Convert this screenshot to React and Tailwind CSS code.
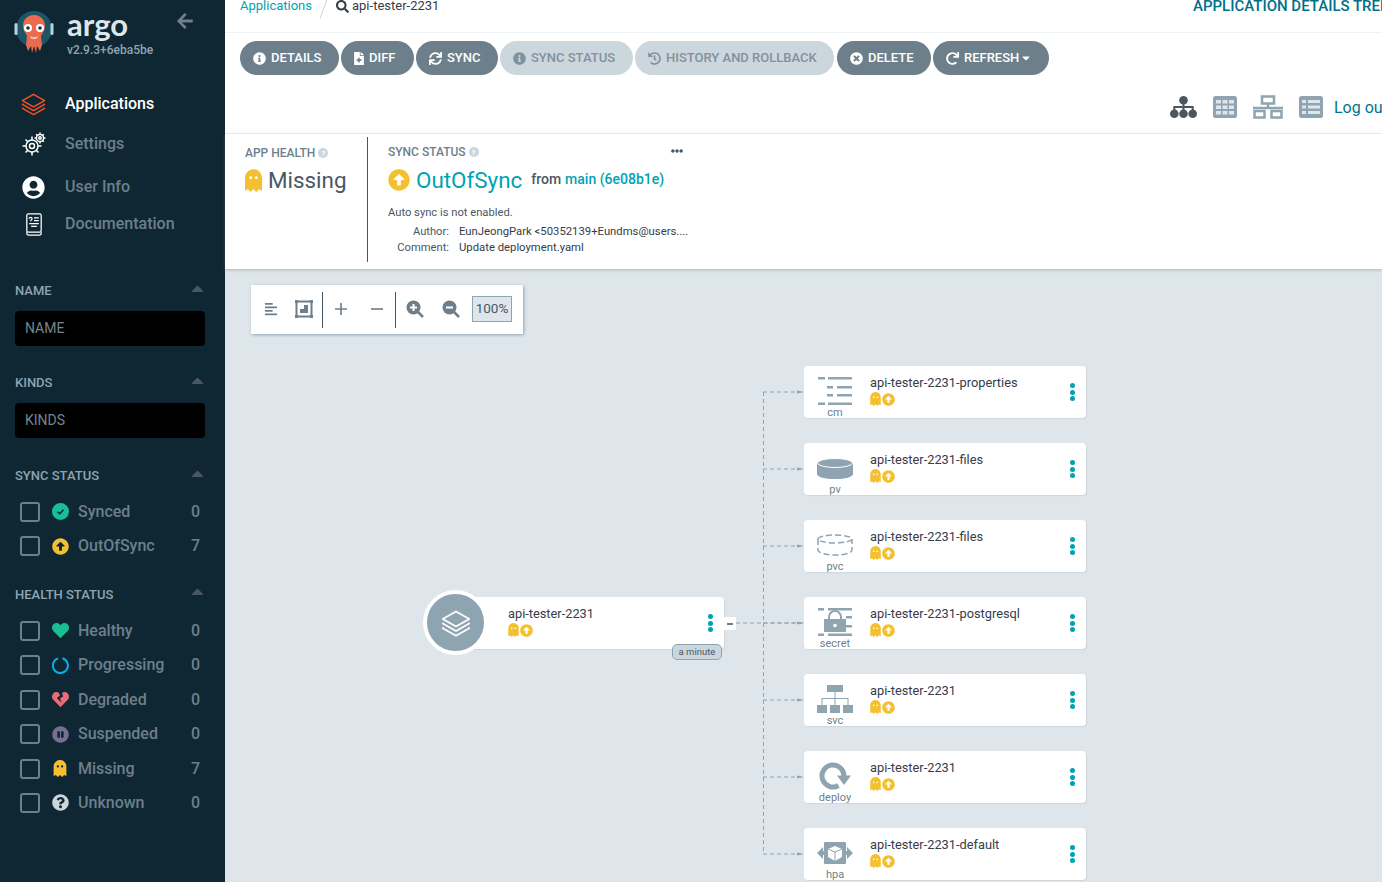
import React from 'react';
import {
  FaArrowLeft, FaCaretUp, FaCaretDown, FaArrowAltCircleUp, FaHeart, FaHeartBroken, FaPauseCircle,
  FaGhost, FaQuestionCircle, FaInfoCircle, FaFileMedical, FaSync, FaHistory, FaTimesCircle, FaRedo, FaSearch,
  FaUserCircle, FaQuestion, FaEllipsisH, FaAlignLeft,
} from 'react-icons/fa';

const nodes = [
  { top: 97, name: 'api-tester-2231-properties', kind: 'cm', Icon: CmIcon },
  { top: 174, name: 'api-tester-2231-files', kind: 'pv', Icon: PvIcon },
  { top: 251, name: 'api-tester-2231-files', kind: 'pvc', Icon: PvcIcon },
  { top: 328, name: 'api-tester-2231-postgresql', kind: 'secret', Icon: SecretIcon },
  { top: 405, name: 'api-tester-2231', kind: 'svc', Icon: SvcIcon },
  { top: 482, name: 'api-tester-2231', kind: 'deploy', Icon: DeployIcon },
  { top: 559, name: 'api-tester-2231-default', kind: 'hpa', Icon: HpaIcon },
];

const buttons = [
  { label: 'DETAILS', Icon: FaInfoCircle, size: 'w-[99px]', iconSize: 'w-[13px]' },
  { label: 'DIFF', Icon: FaFileMedical, size: 'w-[73px]', iconSize: 'w-[10px]' },
  { label: 'SYNC', Icon: FaSync, size: 'w-[82px]', iconSize: 'w-[13px]' },
  { label: 'SYNC STATUS', Icon: FaInfoCircle, off: true, size: 'w-[133px]', iconSize: 'w-[13px]' },
  { label: 'HISTORY AND ROLLBACK', Icon: FaHistory, off: true, size: 'w-[199px]', iconSize: 'w-[13px]' },
  { label: 'DELETE', Icon: FaTimesCircle, size: 'w-[94px] ml-[1px]', iconSize: 'w-[13px]' },
  { label: 'REFRESH', Icon: FaRedo, caret: true, size: 'w-[116px]', iconSize: 'w-[13px]' },
];

function Logo() {
  return (
    <svg viewBox="0 0 40 46" className="w-[40px] h-[46px] shrink-0">
      <circle cx="20" cy="20" r="18" fill="#1d5566" />
      <rect x="0.5" y="14" width="3" height="12" rx="1.5" fill="#b9d3dc" />
      <rect x="36.5" y="14" width="3" height="12" rx="1.5" fill="#b9d3dc" />
      <path d="M9 17c0-7 5-11 11-11s11 4 11 11c0 5-3 7-4 10l1 9-2 6-3-5-1 7-2-7-2 7-1-7-3 5-2-6 1-9c-1-3-4-5-4-10z" fill="#ea6b4e" />
      <circle cx="14" cy="19" r="4" fill="#fff" />
      <circle cx="26" cy="19" r="4" fill="#fff" />
      <circle cx="14" cy="19" r="1.8" fill="#1f2d36" />
      <circle cx="26" cy="19" r="1.8" fill="#1f2d36" />
      <path d="M16 27c2 2 6 2 8 0l-1 2c-2 1-4 1-6 0z" fill="#fff" />
    </svg>
  );
}

function LayersIcon({ className, stroke }) {
  return (
    <svg viewBox="0 0 26 24" fill="none" stroke={stroke} strokeWidth="1.5" strokeLinejoin="round" className={className}>
      <path d="M13 2 L24.5 8.5 L13 15 L1.5 8.5Z" />
      <path d="M2.5 12 L1.5 12.5 L13 19 L24.5 12.5 L23.5 12" />
      <path d="M2.5 16 L1.5 16.5 L13 23 L24.5 16.5 L23.5 16" />
    </svg>
  );
}

function GearsIcon() {
  return (
    <svg viewBox="0 0 24 24" fill="none" stroke="#fff" strokeWidth="1.5" className="w-[24px] h-[24px]">
      <circle cx="10" cy="14" r="6" />
      <circle cx="10" cy="14" r="2.5" />
      <circle cx="18" cy="6" r="3.6" />
      <circle cx="18" cy="6" r="1.2" />
      <path d="M10 4.500v3.500M10 20v3.500M0.500 14h3.500M16 14h3.500M3.500 7.500l2.300 2.300M14.200 18.200l2.300 2.300M3.500 20.500l2.300-2.300M18 0.500v2M18 9.500v2M12.500 6h2M21.500 6h2M14.200 2.200l1.300 1.300M20.500 8.500l1.300 1.300M21.800 2.200l-1.300 1.300" />
    </svg>
  );
}

function DocIcon() {
  return (
    <svg viewBox="0 0 18 24" fill="none" stroke="#fff" strokeWidth="1.3" className="w-[18px] h-[23px]">
      <rect x="1.5" y="1" width="15" height="19" rx="1.5" />
      <path d="M1.5 20v1.5a1.5 1.5 0 0 0 1.5 1.500h12a1.5 1.5 0 0 0 1.500-1.500V20" />
      <path d="M9 5h5M9 8h5M4 11h10M6 14h6" />
      <path d="M4 6c0-2 3-2 3 0 0 1-1.500 1-1.500 2.500" />
    </svg>
  );
}

function SitemapIcon() {
  return (
    <svg viewBox="0 0 27 22" fill="#495763" className="w-[27px] h-[22px]">
      <circle cx="13.500" cy="4.300" r="4.300" />
      <circle cx="4.300" cy="17.700" r="4.300" />
      <circle cx="13.500" cy="17.700" r="4.300" />
      <circle cx="22.700" cy="17.700" r="4.300" />
      <path d="M12.500 6h2v4h9.200v5h-2v-3h-7.200v3h-2v-3H5.300v3h-2v-5h9.200z" />
    </svg>
  );
}

function GridIcon() {
  return (
    <svg viewBox="0 0 24 22" className="w-[24px] h-[22px]">
      <rect width="24" height="22" rx="2.500" fill="#8fa4b1" />
      {[3, 9.500, 16].map((x) =>
        [4, 9.500, 15].map((y) => <rect key={`${x}-${y}`} x={x} y={y} width="5" height="3.500" fill="#dee6eb" />)
      )}
    </svg>
  );
}

function NetworkIcon() {
  return (
    <svg viewBox="0 0 30 24" fill="none" stroke="#8fa4b1" strokeWidth="2.500" className="w-[30px] h-[24px]">
      <rect x="9" y="1.500" width="12" height="7" />
      <path d="M15 8.500v4.500M0 13h30" />
      <rect x="1.500" y="16" width="10" height="6.500" />
      <rect x="18.500" y="16" width="10" height="6.500" />
    </svg>
  );
}

function ListIcon() {
  return (
    <svg viewBox="0 0 24 22" className="w-[24px] h-[22px]">
      <rect width="24" height="22" rx="2.500" fill="#8fa4b1" />
      {[4, 9.500, 15].map((y) => (
        <g key={y} fill="#dee6eb">
          <rect x="3" y={y} width="4" height="3" />
          <rect x="9" y={y} width="12" height="3" />
        </g>
      ))}
    </svg>
  );
}

function CmIcon() {
  return (
    <svg viewBox="0 0 34 28" fill="#8fa4b1" className="w-[34px] h-[28px]">
      <rect x="0" y="0" width="7" height="2.500" />
      <rect x="10" y="0" width="24" height="2.500" />
      <rect x="9" y="9" width="6" height="2.500" />
      <rect x="19" y="9" width="15" height="2.500" />
      <rect x="9" y="17" width="6" height="2.500" />
      <rect x="19" y="17" width="15" height="2.500" />
      <rect x="0" y="25.500" width="7" height="2.500" />
      <rect x="10" y="25.500" width="24" height="2.500" />
    </svg>
  );
}

function PvIcon() {
  return (
    <svg viewBox="0 0 36 21" className="w-[36px] h-[21px]">
      <path d="M0 5v11c0 3 8 5 18 5s18-2 18-5V5z" fill="#8fa4b1" />
      <ellipse cx="18" cy="5" rx="17.500" ry="4.500" fill="#8fa4b1" stroke="#fff" strokeWidth="1" />
    </svg>
  );
}

function PvcIcon() {
  return (
    <svg viewBox="0 0 36 22" fill="none" stroke="#8fa4b1" strokeWidth="1.500" strokeDasharray="6 3" className="w-[36px] h-[22px]">
      <ellipse cx="18" cy="5" rx="17" ry="4" />
      <path d="M1 5v11c0 3 8 5 17 5s17-2 17-5V5" />
    </svg>
  );
}

function SecretIcon() {
  return (
    <svg viewBox="0 0 34 28" fill="#8fa4b1" className="w-[34px] h-[28px]">
      <rect x="0" y="0" width="6" height="2.500" />
      <rect x="10" y="0" width="24" height="2.500" />
      <rect x="28" y="8" width="6" height="2.500" />
      <rect x="28" y="17" width="6" height="2.500" />
      <rect x="0" y="25.500" width="6" height="2.500" />
      <rect x="10" y="25.500" width="24" height="2.500" />
      <path d="M11 11V9a6 6 0 0 1 12 0v2" fill="none" stroke="#8fa4b1" strokeWidth="2" />
      <path d="M6 11h22v13H6z" />
      <circle cx="17" cy="17.500" r="1.800" fill="#fff" />
    </svg>
  );
}

function SvcIcon() {
  return (
    <svg viewBox="0 0 36 28" fill="#8fa4b1" className="w-[36px] h-[28px]">
      <rect x="10" y="0" width="16" height="7" />
      <rect x="0" y="20" width="10" height="8" />
      <rect x="13" y="20" width="10" height="8" />
      <rect x="26" y="20" width="10" height="8" />
      <path d="M17.500 7h1v6h13v7h-1v-6h-12v6h-1v-6h-12v6h-1v-7h13z" />
    </svg>
  );
}

function DeployIcon() {
  return (
    <svg viewBox="0 0 32 28" fill="none" className="w-[32px] h-[28px]">
      <path d="M19.500 23.500A11 11 0 1 1 25 14" stroke="#8fa4b1" strokeWidth="5" />
      <path d="M18 13.500h14l-7 9.500z" fill="#8fa4b1" />
    </svg>
  );
}

function HpaIcon() {
  return (
    <svg viewBox="0 0 36 22" className="w-[36px] h-[22px]">
      <path d="M0 11l6-6v4h3v4H6v4zM36 11l-6-6v4h-3v4h3v4z" fill="#8fa4b1" />
      <rect x="7" y="0" width="22" height="22" rx="1" fill="#8fa4b1" />
      <path d="M18 4l7 3v8l-7 4-7-4V7z" fill="#fff" />
      <path d="M18 10v9M11 7l7 3 7-3" stroke="#8fa4b1" fill="none" strokeWidth="1" />
    </svg>
  );
}

function ZoomIcon({ plus }) {
  return (
    <svg viewBox="0 0 18 18" className="w-[18px] h-[18px] -mt-[2px]">
      <circle cx="7.500" cy="7.500" r="7" fill="#6d7f8b" />
      <path d="M12 12l5 5" stroke="#6d7f8b" strokeWidth="2.500" />
      <path d={plus ? 'M7.500 4v7M4 7.500h7' : 'M4 7.500h7'} stroke="#fff" strokeWidth="2" />
    </svg>
  );
}

function Dots() {
  return (
    <div className="flex flex-col gap-[1.500px]">
      <span className="w-[5px] h-[5px] rounded-full bg-[#00a2b3]" />
      <span className="w-[5px] h-[5px] rounded-full bg-[#00a2b3]" />
      <span className="w-[5px] h-[5px] rounded-full bg-[#00a2b3]" />
    </div>
  );
}

function NodeStatus() {
  return (
    <div className="flex items-center gap-[1px] mt-[1px]">
      <FaGhost className="w-[11px] h-[14px] text-[#f4c030]" />
      <FaArrowAltCircleUp className="w-[13px] h-[13px] text-[#f4c030]" />
    </div>
  );
}

function ResourceNode({ top, name, kind, Icon }) {
  return (
    <div
      className="absolute left-[579px] w-[282px] h-[52px] bg-white rounded-[4px] shadow-[1px_1px_1px_#ccd6dd] flex items-stretch"
      style={{ top }}
    >
      <div className="w-[62px] shrink-0 flex flex-col items-center relative">
        <div className="h-[50px] flex items-center justify-center">
          <Icon />
        </div>
        <span className="absolute top-[40px] text-[11px] leading-[13px] text-[#6d7f8b]">{kind}</span>
      </div>
      <div className="ml-[4px] pt-[8px] flex-1">
        <div className="text-[12.800px] leading-[17px] text-[#363c4a]">{name}</div>
        <NodeStatus />
      </div>
      <div className="absolute left-[266px] top-[17px]">
        <Dots />
      </div>
    </div>
  );
}

function Edges() {
  const ys = [123, 200, 277, 354, 431, 508, 585];
  return (
    <svg className="absolute left-0 top-0 w-[1157px] h-[613px]" fill="none">
      <path d="M511 354H579" stroke="#8fa4b1" strokeWidth="1" strokeDasharray="4 3" />
      <path d="M538.500 123V585" stroke="#8fa4b1" strokeWidth="1" strokeDasharray="4 3" />
      {ys.map((y) => (
        <g key={y}>
          <path d={`M538 ${y}H576`} stroke="#8fa4b1" strokeWidth="1" strokeDasharray="4 3" />
          <path d={`M572 ${y - 1.500}l7 1.500-7 1.500z`} fill="#8fa4b1" />
        </g>
      ))}
    </svg>
  );
}

function Check() {
  return <span className="w-[20px] h-[20px] rounded-[3px] border-2 border-[#6d7f8b] shrink-0" />;
}

function SyncedIcon() {
  return (
    <svg viewBox="0 0 17 17" className="w-[17px] h-[17px]">
      <circle cx="8.500" cy="8.500" r="8.500" fill="#18be94" />
      <path d="M5.500 8.800l2.200 2 3.800-4" fill="none" stroke="#0f2733" strokeWidth="1.500" />
    </svg>
  );
}

function ProgressIcon() {
  return (
    <svg viewBox="0 0 17 17" fill="none" className="w-[17px] h-[17px]">
      <path d="M10.500 1.300A7.500 7.500 0 1 1 6 1.400" stroke="#0dadea" strokeWidth="2" />
    </svg>
  );
}

function FilterRow({ icon, label, count }) {
  return (
    <div className="h-[34.400px] flex items-center pl-[20px] pr-[25px] text-[16px] font-medium text-[#6d7f8b]">
      <Check />
      <span className="w-[18px] ml-[11px] mr-[1px] flex justify-center">{icon}</span>
      <span className="ml-[8px] flex-1">{label}</span>
      <span>{count}</span>
    </div>
  );
}

function SectionHead({ label, className }) {
  return (
    <div className={`flex items-center justify-between pl-[15px] pr-[18px] text-[13px] leading-[16px] font-medium text-[#8fa4b1] ${className}`}>
      <span>{label}</span>
      <FaCaretUp className="w-[19px] h-[19px] text-[#495763] -mt-[6px]" />
    </div>
  );
}

function SideInput({ label, className }) {
  return (
    <div className={`ml-[15px] mr-[20px] h-[35px] bg-black rounded-[4px] flex items-center pl-[10px] text-[14px] text-[#75858f] ${className}`}>
      {label}
    </div>
  );
}

function NavItem({ icon, label, active, className }) {
  return (
    <div className={`flex items-center h-[24px] ${className}`}>
      <span className="w-[65px] pl-[21px] flex">
        <span className="w-[25px] flex justify-center">{icon}</span>
      </span>
      <span className={`text-[16px] font-medium ${active ? 'text-white' : 'text-[#6d7f8b]'}`}>{label}</span>
    </div>
  );
}

function Sidebar() {
  return (
    <aside className="w-[225px] shrink-0 bg-[#0f2733] flex flex-col overflow-hidden">
      <div className="flex pl-[14px] pt-[9px] h-[84px]">
        <Logo />
        <div className="ml-[13px] -mt-[1px]">
          <div className="text-[31px] leading-[32px] font-bold text-[#dee6eb] font-['Lato',sans-serif]">argo</div>
          <div className="mt-[3px] text-[12px] leading-[14px] font-medium text-[#8fa4b1]">v2.9.3+6eba5be</div>
        </div>
        <FaArrowLeft className="ml-[23px] mt-[3px] w-[18px] h-[18px] text-[#6d7f8b]" />
      </div>
      <NavItem icon={<LayersIcon className="w-[26px] h-[24px]" stroke="#f4512c" />} label="Applications" active className="mt-[8px]" />
      <NavItem icon={<GearsIcon />} label="Settings" className="mt-[16px]" />
      <NavItem icon={<FaUserCircle className="w-[23px] h-[23px] text-white -ml-[1px]" />} label="User Info" className="mt-[19px]" />
      <NavItem icon={<DocIcon />} label="Documentation" className="mt-[13px]" />

      <SectionHead label="NAME" className="mt-[47px]" />
      <SideInput label="NAME" className="mt-[12px]" />
      <SectionHead label="KINDS" className="mt-[29px]" />
      <SideInput label="KINDS" className="mt-[12px]" />
      <SectionHead label="SYNC STATUS" className="mt-[30px]" />
      <div className="mt-[10.600px]">
        <FilterRow icon={<SyncedIcon />} label="Synced" count="0" />
        <FilterRow icon={<FaArrowAltCircleUp className="w-[17px] h-[17px] text-[#f4c030]" />} label="OutOfSync" count="7" />
      </div>
      <SectionHead label="HEALTH STATUS" className="mt-[23.400px]" />
      <div className="mt-[11px]">
        <FilterRow icon={<FaHeart className="w-[17px] h-[17px] text-[#18be94]" />} label="Healthy" count="0" />
        <FilterRow icon={<ProgressIcon />} label="Progressing" count="0" />
        <FilterRow icon={<FaHeartBroken className="w-[17px] h-[17px] text-[#e96d76]" />} label="Degraded" count="0" />
        <FilterRow icon={<FaPauseCircle className="w-[17px] h-[17px] text-[#766f94]" />} label="Suspended" count="0" />
        <FilterRow icon={<FaGhost className="w-[14px] h-[17px] text-[#f4c030]" />} label="Missing" count="7" />
        <FilterRow icon={<FaQuestionCircle className="w-[17px] h-[17px] text-[#ccd6dd]" />} label="Unknown" count="0" />
      </div>
    </aside>
  );
}

function ActionButton({ label, Icon, off, caret, size, iconSize }) {
  return (
    <button className={`h-[34px] shrink-0 rounded-[17px] pl-[13px] flex items-center gap-[5px] text-[13px] font-medium whitespace-nowrap ${size} ${off ? 'bg-[#ccd6dd] text-[#7f929f]' : 'bg-[#6d7f8b] text-white'}`}>
      <Icon className={`h-[13px] ${iconSize}`} />
      <span className="flex items-center gap-[1px]">
        {label}
        {caret && <FaCaretDown className="w-[12px] h-[12px]" />}
      </span>
    </button>
  );
}

function Hint() {
  return (
    <span className="inline-flex w-[10px] h-[10px] rounded-full bg-[#ccd6dd] items-center justify-center ml-[3px]">
      <FaQuestion className="w-[5px] h-[5px] text-white" />
    </span>
  );
}

function Header() {
  return (
    <>
      <div className="h-[33px] shrink-0 border-b border-[#eff3f5] flex items-start justify-between">
        <div className="flex items-center pl-[15px] h-[14px] -mt-[1px] text-[13px]">
          <span className="text-[#00a2b3]">Applications</span>
          <span className="w-[1px] h-[20px] bg-[#ccd6dd] rotate-[20deg] ml-[11px] mt-[5px]" />
          <FaSearch className="ml-[12px] w-[13px] h-[13px] text-[#363c4a]" />
          <span className="ml-[3px] text-[#363c4a]">api-tester-2231</span>
        </div>
        <div className="text-[15px] leading-[14px] -mt-[1px] font-medium text-[#006f8a] whitespace-nowrap w-[189px] overflow-hidden">
          APPLICATION DETAILS TREE
        </div>
      </div>
      <div className="h-[101px] shrink-0 border-b border-[#eff3f5] pt-[8px] pl-[15px] flex flex-col">
        <div className="flex gap-[2px]">
          {buttons.map((b) => (
            <ActionButton key={b.label} {...b} />
          ))}
        </div>
        <div className="flex items-center justify-end mt-[20px] h-[24px] overflow-hidden">
          <SitemapIcon />
          <span className="ml-[16px]"><GridIcon /></span>
          <span className="ml-[16px]"><NetworkIcon /></span>
          <span className="ml-[16px]"><ListIcon /></span>
          <span className="ml-[11px] w-[48px] shrink-0 overflow-hidden whitespace-nowrap text-[16px] leading-[24px] mt-[1px] text-[#00758f]">Log out</span>
        </div>
      </div>
    </>
  );
}

function StatusPanel() {
  return (
    <div className="h-[135px] shrink-0 bg-white relative z-10 shadow-[0_1px_3px_rgba(109,127,139,0.45)] flex pt-[3px] pb-[7px] text-[#495763]">
      <div className="w-[143px] pl-[20px] border-r border-[#495763] shrink-0">
        <div className="mt-[9px] flex items-center text-[12px] leading-[14px] font-medium text-[#6d7f8b]">
          APP HEALTH
          <Hint />
        </div>
        <div className="mt-[4px] flex items-center text-[22.400px] leading-[32px]">
          <FaGhost className="w-[17px] h-[23px] text-[#f4c030] mr-[6px]" />
          Missing
        </div>
      </div>
      <div className="pl-[20px] w-[315px] relative">
        <div className="mt-[8px] flex items-center text-[12px] leading-[14px] font-medium text-[#6d7f8b]">
          SYNC STATUS
          <Hint />
        </div>
        <FaEllipsisH className="absolute right-0 top-[8px] w-[12px] h-[12px] text-[#495763]" />
        <div className="mt-[5px] flex items-center">
          <FaArrowAltCircleUp className="w-[22px] h-[22px] text-[#f4c030]" />
          <span className="ml-[6px] text-[22.400px] leading-[32px] text-[#00a2b3]">OutOfSync</span>
          <span className="ml-[9px] text-[14px] font-medium -mt-[2px]">from</span>
          <span className="ml-[4px] text-[14px] font-medium -mt-[2px] text-[#00a2b3]">main (6e08b1e)</span>
        </div>
        <div className="mt-[10px] text-[11.200px] leading-[14px]">Auto sync is not enabled.</div>
        <div className="mt-[4px] flex text-[11.200px] leading-[16px]">
          <span className="w-[61px] shrink-0 text-right">Author:</span>
          <span className="ml-[10px] shrink-0 text-[11.300px] text-[#363c4a] whitespace-nowrap">EunJeongPark &lt;50352139+Eundms@users....</span>
        </div>
        <div className="flex text-[11.200px] leading-[16px]">
          <span className="w-[61px] shrink-0 text-right">Comment:</span>
          <span className="ml-[10px] text-[11.300px] text-[#363c4a]">Update deployment.yaml</span>
        </div>
      </div>
    </div>
  );
}

function GraphToolbar() {
  return (
    <div className="relative mt-[16px] ml-[26px] w-[272px] h-[49px] bg-white shadow-[1px_1px_3px_#8fa4b1] flex items-center text-[#6d7f8b]">
      <FaAlignLeft className="ml-[13px] w-[14px] h-[14px] -mt-[2px]" />
      <svg viewBox="0 0 18 18" fill="none" stroke="#6d7f8b" className="ml-[17px] w-[18px] h-[18px] -mt-[2px]">
        <rect x="1.500" y="1.500" width="15" height="15" strokeWidth="2" />
        <rect x="0" y="0" width="3" height="3" fill="#6d7f8b" stroke="none" />
        <rect x="15" y="0" width="3" height="3" fill="#6d7f8b" stroke="none" />
        <rect x="0" y="15" width="3" height="3" fill="#6d7f8b" stroke="none" />
        <rect x="15" y="15" width="3" height="3" fill="#6d7f8b" stroke="none" />
        <rect x="5" y="5" width="8" height="8" fill="#6d7f8b" stroke="none" />
        <rect x="5" y="5" width="4" height="4" fill="#fff" stroke="none" />
      </svg>
      <span className="ml-[9px] w-[1px] h-[36px] bg-[#495763]" />
      <svg viewBox="0 0 13 13" className="ml-[12px] w-[12px] h-[12px] -mt-[2px]">
        <path d="M6.500 0v13M0 6.500h13" stroke="#6d7f8b" strokeWidth="1.800" />
      </svg>
      <svg viewBox="0 0 13 13" className="ml-[24px] w-[12px] h-[12px] -mt-[2px]">
        <path d="M0 6.500h13" stroke="#6d7f8b" strokeWidth="1.800" />
      </svg>
      <span className="ml-[12px] w-[1px] h-[36px] bg-[#495763]" />
      <span className="ml-[10px] flex"><ZoomIcon plus /></span>
      <span className="ml-[18px] flex"><ZoomIcon /></span>
      <span className="ml-[12px] -mt-[2px] w-[40px] h-[26px] bg-[#dee6eb] border border-[#8fa4b1] flex items-center justify-center text-[13.500px] text-[#495763]">100%</span>
    </div>
  );
}

function AppNode() {
  return (
    <>
      <div className="absolute left-[230px] top-[328px] w-[269px] h-[52px] bg-white rounded-[4px] shadow-[1px_1px_1px_#ccd6dd]">
        <div className="pl-[53px] pt-[8px]">
          <div className="text-[12.800px] leading-[17px] text-[#363c4a]">api-tester-2231</div>
          <NodeStatus />
        </div>
        <div className="absolute left-[253px] top-[17px]">
          <Dots />
        </div>
      </div>
      <div className="absolute left-[198px] top-[321px] w-[65px] h-[65px] rounded-full bg-[#8fa4b1] border-[4px] border-white flex items-center justify-center">
        <LayersIcon className="w-[30px] h-[28px]" stroke="#fff" />
      </div>
      <div className="absolute left-[499px] top-[348px] w-[12px] h-[13px] bg-white flex items-center justify-center">
        <span className="w-[6px] h-[2px] bg-[#6d7f8b]" />
      </div>
      <div className="absolute left-[447px] top-[375px] w-[50px] h-[16px] rounded-[5px] bg-[#ccd6dd] border border-[#8fa4b1] flex items-center justify-center text-[9.500px] text-[#495763]">
        a minute
      </div>
    </>
  );
}

export default function App() {
  return (
    <div className="w-[1382px] h-[882px] overflow-hidden flex bg-white font-['Roboto',sans-serif]">
      <Sidebar />
      <main className="flex-1 min-w-0 flex flex-col">
        <Header />
        <StatusPanel />
        <div className="flex-1 bg-[#dee6eb] relative overflow-hidden">
          <GraphToolbar />
          <Edges />
          <AppNode />
          {nodes.map((n) => (
            <ResourceNode key={n.top} {...n} />
          ))}
        </div>
      </main>
    </div>
  );
}
